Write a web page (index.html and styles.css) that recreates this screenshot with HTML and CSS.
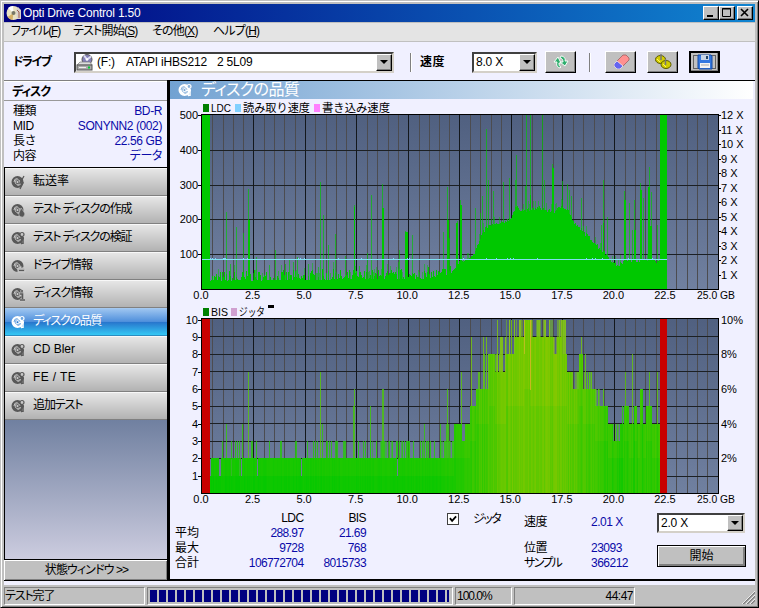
FILE: index.html
```html
<!DOCTYPE html>
<html lang="ja">
<head>
<meta charset="utf-8">
<title>Opti Drive Control 1.50</title>
<link rel="stylesheet" href="styles.css">
</head>
<body>
<svg class="defs" width="0" height="0">
  <symbol id="disc" viewBox="0 0 16 16">
    <path fill="currentColor" fill-rule="evenodd" d="M7.5 2a6 6 0 1 0 0 12a6 6 0 1 0 0-12zM7.5 7a1.1 1.1 0 1 1 0 2.2a1.1 1.1 0 1 1 0-2.2z"/>
    <path fill="none" stroke="var(--ring)" stroke-width="1" d="M4 8a3.5 3.5 0 0 1 3.5-3.5M11 8a3.5 3.5 0 0 1-3.5 3.5M7.5 5.7a2.4 2.4 0 1 0 .1 0"/>
  </symbol>
  <symbol id="gears" viewBox="0 0 16 16">
    <use href="#disc"/>
    <circle cx="12" cy="4.5" r="2" fill="var(--ring)" stroke="currentColor" stroke-width="1.2"/>
    <path d="M9 8.5h5M13 7v7M10 11l2 3" stroke="currentColor" stroke-width="1.5"/>
  </symbol>
</svg>
<div class="window">
  <header class="titlebar">
    <svg class="app-icon" viewBox="0 0 16 16"><circle cx="7.5" cy="8" r="7" fill="#e9e2c4"/><path d="M7.5 8L2 3a7 7 0 0 1 5-2z" fill="#fff"/><path d="M7.5 8l-6 4a7 7 0 0 0 5 3z" fill="#d7b268"/><circle cx="7.5" cy="8" r="2" fill="#776"/><path d="M10 5l2-3 3 3v9h-4z" fill="#d9d2cc"/><path d="M11 5l2 2v6" stroke="#9a5a4a" fill="none"/></svg>
    <h1>Opti Drive Control 1.50</h1>
    <div class="win-buttons">
      <button class="wb"><svg viewBox="0 0 14 12"><path d="M3 9h6" stroke="#000" stroke-width="2"/></svg></button><button class="wb"><svg viewBox="0 0 14 12"><path d="M2.5 1.5h8v8h-8zM2 2h9" stroke="#000" fill="none"/></svg></button><button class="wb close"><svg viewBox="0 0 14 12"><path d="M3 2l7 7M10 2l-7 7" stroke="#000" stroke-width="1.6"/></svg></button>
    </div>
  </header>
  <nav class="menu"><span class="m1">ファイル(<u>F</u>)</span><span class="m2">テスト開始(<u>S</u>)</span><span class="m3">その他(<u>X</u>)</span><span class="m4">ヘルプ(<u>H</u>)</span></nav>
  <div class="toolbar">
    <b class="lbl-drive">ドライブ</b>
    <div class="combo drive">
      <svg class="drive-icon" viewBox="0 0 18 17"><circle cx="11" cy="5.5" r="5" fill="#8580b8" stroke="#555"/><path d="M11 5.5L8 1.5M11 5.5l4-3" stroke="#dcdcf4" stroke-width="2"/><circle cx="11" cy="5.5" r="1.3" fill="#fff"/><path d="M1 11l3-3h10l2 3z" fill="#ddd" stroke="#777" stroke-width=".7"/><rect x="1" y="11" width="15" height="5" fill="#aaa" stroke="#555"/><path d="M3 13.5h7" stroke="#eee"/><rect x="12" y="12.5" width="2" height="2" fill="#0c3"/></svg>
      <span class="combo-text"><span class="letter">(F:)</span><span class="model">ATAPI iHBS212</span><span>2 5L09</span></span><i class="arrow"></i>
    </div>
    <i class="sep s1"></i>
    <b class="lbl-speed">速度</b>
    <div class="combo speed"><span class="combo-text">8.0 X</span><i class="arrow"></i></div>
    <button class="tool t1"><svg viewBox="0 0 18 16"><path d="M8 14c-3-1-4-3-3-6H2l4-5 3 6H7c0 2 0 3 2 4zM9 2c3 0 5 3 4 5h3l-3 5-5-4h3c0-2-1-4-3-4z" fill="#2fae6e" stroke="#f4fff8" stroke-width="1"/></svg></button>
    <i class="sep s2"></i>
    <button class="tool t2"><svg viewBox="0 0 18 16"><path d="M2 10L11 1h3l3 3v2L8 15H5l-3-3z" fill="#ff9090" stroke="#a06060" stroke-width=".8"/><path d="M2 10l3-3 6 5-3 3H5l-3-3z" fill="#6464f0" stroke="#eee" stroke-width=".8"/></svg></button>
    <button class="tool t3"><svg viewBox="0 0 18 16"><g fill="#d2cc00" stroke="#5c5a00"><ellipse cx="6.5" cy="5.5" rx="5" ry="4"/><ellipse cx="12" cy="10.5" rx="5" ry="4"/></g><path d="M3 5l3 3M9 10l3 3" stroke="#fff860"/><path d="M7 0v6M11.500 5v6" stroke="#777" stroke-width="1.5"/></svg></button>
    <button class="tool t4"><svg viewBox="0 0 24 16"><rect x=".5" y="1.5" width="22" height="13" fill="none" stroke="#000" stroke-dasharray="1 1"/><path d="M5 1h13l1 1v13H6l-1-1z" fill="#3478e0" stroke="#164aa0"/><path d="M8 1h8v5H8z" fill="#c8d4e4"/><path d="M13 2h2v3h-2z" fill="#246"/><path d="M7 9h10v5H7z" fill="#f4f4f4"/><path d="M8 11h8" stroke="#aaa"/></svg></button>
  </div>
  <div class="content">
    <aside class="sidebar">
      <h2>ディスク</h2>
      <dl class="info">
        <div><dt>種類</dt><dd>BD-R</dd></div>
        <div><dt>MID</dt><dd>SONYNN2 (002)</dd></div>
        <div><dt>長さ</dt><dd>22.56 GB</dd></div>
        <div><dt>内容</dt><dd class="kana">データ</dd></div>
      </dl>
      <ul class="tests">
        <li><svg viewBox="0 0 16 16"><use href="#disc"/><path d="M14 2l-4 7h3l-3 6" stroke="currentColor" fill="none" stroke-width="1.3"/></svg><span>転送率</span></li>
        <li><svg viewBox="0 0 16 16"><use href="#disc"/><path d="M11 6l3 4a3 3 0 1 1-5 1z" fill="currentColor" stroke="#ccc" stroke-width=".6"/></svg><span class="n2">テスト ディスクの作成</span></li>
        <li><svg viewBox="0 0 16 16"><use href="#gears"/></svg><span class="n2">テスト ディスクの検証</span></li>
        <li><svg viewBox="0 0 16 16"><use href="#disc"/><path d="M8 10h7v4H8z" fill="#aaa" stroke="#ccc"/><path d="M9 12.5h5" stroke="currentColor"/></svg><span class="n3">ドライブ情報</span></li>
        <li><svg viewBox="0 0 16 16"><use href="#disc"/><path d="M10 8h3v5M10 14h5M12 4v2" stroke="#ccc" stroke-width="3" fill="none"/><path d="M10 8h2.500v5M10 14h5M12 4v2" stroke="currentColor" stroke-width="1.6" fill="none"/></svg><span class="n3">ディスク情報</span></li>
        <li class="active"><svg viewBox="0 0 16 16"><use href="#gears"/></svg><span class="n4">ディスクの品質</span></li>
        <li><svg viewBox="0 0 16 16"><use href="#gears"/></svg><span>CD Bler</span></li>
        <li><svg viewBox="0 0 16 16"><use href="#gears"/></svg><span class="fe">FE / TE</span></li>
        <li><svg viewBox="0 0 16 16"><use href="#gears"/></svg><span class="n5">追加テスト</span></li>
      </ul>
      <div class="filler"></div>
      <button class="status-toggle">状態ウィンドウ &gt;&gt;</button>
    </aside>
    <main class="panel">
      <div class="panel-head"><svg viewBox="0 0 16 16"><use href="#gears"/></svg><span>ディスクの品質</span></div>
      <svg id="ldc" class="chart" width="583" height="205" viewBox="170 99 583 205"></svg>
      <svg id="bis" class="chart" width="583" height="202" viewBox="170 304 583 202"></svg>
      <div class="results">
        <table>
          <tr><th></th><td class="h">LDC</td><td class="h">BIS</td></tr>
          <tr><th>平均</th><td>288.97</td><td>21.69</td></tr>
          <tr><th>最大</th><td>9728</td><td>768</td></tr>
          <tr><th>合計</th><td>106772704</td><td>8015733</td></tr>
        </table>
        <div class="jitter"><i class="check"><svg viewBox="0 0 9 9"><path d="M1 3.500l2.500 3L8 1.500" stroke="#000" stroke-width="2" fill="none"/></svg></i><span>ジッタ</span></div>
        <dl class="pos">
          <dt>速度</dt><dd>2.01 X</dd>
          <dt>位置</dt><dd>23093</dd>
          <dt class="sample">サンプル</dt><dd>366212</dd>
        </dl>
        <div class="actions">
          <div class="combo scan"><span class="combo-text">2.0 X</span><i class="arrow"></i></div>
          <button class="start">開始</button>
        </div>
      </div>
    </main>
  </div>
  <footer class="statusbar">
    <div class="pane p1">テスト完了</div>
    <div class="pane p2"><i class="bar"></i></div>
    <div class="pane p3">100.0%</div>
    <div class="pane p4">44:47</div>
    <svg class="grip" viewBox="0 0 13 13"><path d="M1 13L13 1M5 13l8-8M9 13l4-4" stroke="#808080" stroke-width="1.6"/><path d="M0 13L13 0M4 13l9-9M8 13l5-5" stroke="#fff" stroke-width=".8"/></svg>
  </footer>
</div>
<script src="charts.js"></script>
</body>
</html>
```
FILE: styles.css
```css
* { box-sizing: border-box; }
body { margin: 0; background: #c0c0c0; }
body, button { font: 12px/15px "Liberation Sans", "Noto Sans CJK JP", sans-serif; color: #000; }
button { padding: 0; }
.defs { position: absolute; }
svg { display: block; }
h1, h2, dl, dd, ul { margin: 0; padding: 0; font-weight: normal; }
.window { width: 759px; height: 608px; padding: 3px 3px 2px; border: 1px solid; border-color: #c0c0c0 #000 #000 #c0c0c0; box-shadow: inset 1px 1px #fff, inset -1px -1px #808080; background: #c0c0c0; display: flex; flex-direction: column; overflow: hidden; white-space: nowrap; }

.titlebar { flex: 0 0 18px; display: flex; align-items: center; background: linear-gradient(90deg, #000080, #1084d0); color: #fff; padding: 0 2px; }
.app-icon { width: 16px; height: 16px; }
.titlebar h1 { font-size: 12px; line-height: 18px; margin-left: 1px; flex: 1; letter-spacing: -0.2px; }
.win-buttons { display: flex; }
.wb { width: 16px; height: 14px; background: #c0c0c0; border: 1px solid; border-color: #fff #000 #000 #fff; box-shadow: inset -1px -1px #808080; }
.wb svg { width: 14px; height: 12px; }
.close { margin-left: 2px; }

.menu { flex: 0 0 20px; background: #e4e4e4; border-top: 1px solid #c0c0c0; border-bottom: 1px solid #c0c0c0; display: flex; line-height: 17px; padding-left: 7px; font-feature-settings: "palt"; }
.menu span { letter-spacing: -0.8px; }
.m1 { width: 62px; } .m2 { width: 79px; } .m3 { width: 61px; }
.menu .m1 { letter-spacing: -1.1px; }

.toolbar { flex: 0 0 38px; display: flex; align-items: center; padding: 2px 0 0 9px; background: #f0f0ff; }
.lbl-drive { width: 61px; font-feature-settings: "palt"; letter-spacing: -1.5px; }
.lbl-speed { width: 52px; letter-spacing: 0.5px; margin-left: 8px; }
.combo { display: flex; background: #fff; border: 2px solid; border-color: #404040 #d4d0c8 #d4d0c8 #404040; height: 21px; line-height: 17px; }
.combo-text { flex: 1; padding-left: 2px; letter-spacing: -0.2px; }
.drive { width: 320px; margin-right: 16px; }
.drive .combo-text { display: flex; }
.letter { width: 30px; padding-left: 1px; }
.model { width: 91px; }
.drive-icon { width: 18px; height: 17px; }
.speed { width: 65px; }
.arrow { width: 16px; background: #c0c0c0; border: 1px solid; border-color: #fff #000 #000 #fff; box-shadow: inset -1px -1px #808080; display: grid; place-items: center; }
.arrow::before { content: ""; border: solid transparent; border-width: 4px 4px 0; border-top-color: #000; }
.sep { width: 2px; height: 19px; border-left: 1px solid #808080; border-right: 1px solid #fff; }
.tool { width: 31px; height: 22px; background: #c0c0c0; border: 1px solid; border-color: #fff #000 #000 #fff; box-shadow: inset -1px -1px #808080; display: grid; place-items: center; }
.tool svg { width: 18px; height: 16px; }
.t1 { margin: 0 13px 0 8px; }
.t2 { margin-left: 14px; }
.t3, .t4 { margin-left: 11px; }
.t4 { border: 2px solid #000; }
.tool.t4 svg { width: 24px; }

.content { flex: 0 0 501px; display: flex; border-bottom: 1px solid #000; background: #f0f0ff; }
.sidebar { width: 166px; border-right: 3px solid #000; display: flex; flex-direction: column; }
.sidebar h2 { height: 21px; border-top: 1px solid #808080; box-shadow: inset 0 1px #fff; font-size: 12px; font-weight: bold; line-height: 22px; padding-left: 8px; border-bottom: 1px solid #999; font-feature-settings: "palt"; letter-spacing: -1px; }
.info { height: 66px; padding: 3px 5px 0 9px; }
.info div { display: flex; justify-content: space-between; }
dd, .results td { color: #0a0aa8; }
.info dt, .info dd { letter-spacing: -0.4px; }
.kana { font-feature-settings: "palt"; }
.tests { list-style: none; border-top: 1px solid #000; border-left: 1px solid #000; }
.tests li { --ring: #c8c8c8; color: #000; height: 28px; display: flex; align-items: center; padding-left: 5px; border-top: 1px solid #f8f8f8; border-bottom: 1px solid #808080; background: linear-gradient(#e6e6e6, #b2b2b2); }
.tests svg { width: 16px; height: 16px; color: #585858; margin-right: 7px; }
.tests .active { --ring: #6aa4e0; color: #fff; border-top-color: #a4c8f0; border-bottom-color: #2a8cc0; background: linear-gradient(#9cc4f0, #5090dc 48%, #2874cc 50%, #34c8f4); }
.tests .active svg { color: #fff; }
.tests span { line-height: 18px; padding-bottom: 2px; font-feature-settings: "palt"; }
.n2 { letter-spacing: -1.15px; }
.n3 { letter-spacing: -1px; }
.n4, .n5 { letter-spacing: -1.1px; }
.tests .n4 { letter-spacing: -1.2px; }
.fe { letter-spacing: 0.4px; }
.filler { flex: 1; border-left: 1px solid #000; background: linear-gradient(#7080a0, #ccccdf); }
.status-toggle { height: 21px; background: #c0c0c0; border: 0; border-top: 1px solid #000; box-shadow: inset 1px 1px #fff, inset -1px -1px #808080; font-feature-settings: "palt"; letter-spacing: -0.9px; padding-left: 2px; }

.panel { width: 585px; border-top: 1px solid #000; border-bottom: 1px solid #000; }
.panel-head { --ring: #8cb4dc; height: 18px; width: 583px; display: flex; align-items: center; color: #fff; background: linear-gradient(90deg, #72a2d2, #fff); padding-left: 7px; font-size: 16px; line-height: 18px; font-feature-settings: "palt"; letter-spacing: -0.6px; }
.panel-head svg { width: 16px; height: 16px; margin-right: 8px; }
.chart text { font: 11px "Liberation Sans", "Noto Sans CJK JP", sans-serif; }
.results { display: flex; height: 71px; padding-left: 5px; }
.results table { border-collapse: collapse; width: 191px; height: 60px; margin-top: 5px; table-layout: fixed; }
.results th, .results td { padding: 0; height: 15px; line-height: 15px; text-align: right; }
.results th { font-weight: normal; text-align: left; width: 66px; }
.results td { letter-spacing: -0.6px; }
.results .h { color: #000; }
.jitter { display: flex; align-items: center; height: 14px; margin: 6px 0 0 81px; width: 77px; font-feature-settings: "palt"; letter-spacing: -1.5px; }
.check { width: 12px; height: 12px; border: 1px solid #404040; background: #fff; margin-right: 14px; padding: 1px; }
.pos { display: grid; grid-template-columns: 67px 66px; grid-template-rows: 26px 15px 15px; margin-top: 9px; letter-spacing: -0.5px; }
.sample { font-feature-settings: "palt"; letter-spacing: -1.7px; }
.scan { width: 88px; height: 20px; line-height: 16px; margin-top: 7px; }
.start { width: 89px; height: 22px; margin-top: 12px; background: #c0c0c0; border: 1px solid #000; box-shadow: inset 1px 1px #fff, inset -2px -2px #808080; }

.statusbar { flex: 1; border-top: 4px solid #f0f0ff; background: #c0c0c0; display: flex; padding-top: 2px; gap: 2px; }
.pane { height: 18px; border: 1px solid; border-color: #808080 #fff #fff #808080; line-height: 16px; }
.p1 { width: 141px; font-feature-settings: "palt"; letter-spacing: -1.1px; }
.p2 { width: 306px; padding: 2px 3px 2px 2px; }
.bar { display: block; height: 12px; background: repeating-linear-gradient(90deg, #000080 0 7px, #c0c0c0 7px 9px); }
.p3 { width: 57px; letter-spacing: -1px; padding-left: 1px; }
.p4 { width: 121px; text-align: right; padding-right: 1px; letter-spacing: -0.5px; }
.grip { width: 13px; height: 13px; margin: 4px 0 0 auto; }
```
FILE: charts.js
```js
const LEFT = 202, RIGHT = 718, GB = 20.62;
let seed = 7;
const rnd = () => (seed = (seed * 16807) % 2147483647) / 2147483647;
const rect = (x, y, w, h, fill, o = 1) => `<rect x="${x}" y="${y}" width="${w}" height="${h}" fill="${fill}" fill-opacity="${o}"/>`;
const label = (x, y, s, anchor, w) => `<text x="${x}" y="${y}" text-anchor="${anchor}"${w ? ` textLength="${w}" lengthAdjust="spacingAndGlyphs"` : ''}>${s}</text>`;

function interpolate(points, x) {
  for (let i = 1; i < points.length; i++) {
    const [x0, y0] = points[i - 1], [x1, y1] = points[i];
    if (x <= x1) return y0 + (y1 - y0) * (x - x0) / (x1 - x0);
  }
  return points[points.length - 1][1];
}

function frame(id, top, bottom, rows) {
  let s = `<defs><linearGradient id="bg-${id}" x2="0" y2="1"><stop stop-color="#506080"/><stop offset="1" stop-color="#7080a0"/></linearGradient></defs>`;
  s += rect(LEFT, top, RIGHT - LEFT, bottom - top, `url(#bg-${id})`);
  for (let i = 1; i < 50; i++) if (i % 5) s += rect(Math.round(LEFT + i * GB / 2), top, 1, bottom - top, '#4c4c50');
  for (let i = 1; i < rows; i++) s += rect(LEFT, Math.round(top + i * (bottom - top) / rows), RIGHT - LEFT, 1, '#1c2024');
  for (let i = 5; i < 50; i += 5) s += rect(Math.floor(LEFT + i * GB / 2), top, 1, bottom - top, '#14181c');
  return s;
}

function axes(top, bottom) {
  let s = rect(LEFT - 1, top - 1, RIGHT - LEFT + 2, 1, '#000') + rect(LEFT - 1, bottom, RIGHT - LEFT + 2, 1, '#000')
    + rect(LEFT - 1, top, 1, bottom - top, '#000') + rect(RIGHT, top, 1, bottom - top, '#000');
  for (let i = 0; i <= 10; i++) {
    const x = LEFT + i * 2.5 * GB - 1;
    s += i < 10 ? label(x, bottom + 10, (i * 2.5).toFixed(1), 'middle') : label(697, bottom + 10, '25.0 GB', 'start', 38);
  }
  return s;
}

function drawLdc() {
  const top = 115, bottom = 289;
  const floor = [[210, 281], [420, 279], [440, 277], [452, 273], [459, 265], [468, 261], [475, 253], [480, 241], [485, 230], [488, 228], [500, 226], [510, 220], [516, 209], [524, 213], [532, 211], [540, 210], [548, 213], [556, 213], [562, 207], [568, 213], [573, 224], [580, 232], [590, 240], [600, 251], [610, 261], [615, 267], [620, 266], [625, 262], [660, 263]];
  const spikes = [[226,212],[236,227],[243,233],[248,189],[275,250],[320,182],[323,215],[328,245],[335,234],[354,205],[230,264],[256,257],[269,265],[285,264],[289,260],[293,262],[297,257],[308,264],[318,267],[345,256],[359,266],[367,253],[371,195],[382,184],[399,250],[405,231],[412,235],[443,232],[447,187],[449,238],[457,221],[460,200],[475,208],[480,213],[482,196],[486,129],[488,180],[493,191],[503,182],[509,178],[515,180],[516,155],[525,186],[526,115],[530,115],[542,115],[544,180],[552,164],[562,181],[567,184],[569,190],[571,196],[581,198],[583,226],[601,225],[603,180],[607,217],[624,191],[629,203],[632,230],[634,200],[640,183],[643,198],[649,167],[651,192],[657,225]];
  const solid = [[248,220,2],[354,207,1],[382,208,2],[405,232,3],[447,220,2],[456,223,2],[460,205,2],[552,168,2],[581,228,1],[603,223,1],[624,200,2],[634,230,2],[640,190,2],[648,187,2],[650,226,2],[530,195,1]];
  let s = frame('ldc', top, bottom, 5);
  for (const [x, y] of spikes) s += rect(x, y, 1, bottom - y, '#00c800', 0.65);
  for (let x = 210; x < 660; x++) {
    const noise = x < 455 ? Math.pow(rnd(), 2.5) * 11 : rnd() * 4;
    const y = Math.round(interpolate(floor, x) - noise);
    s += rect(x, y, 1, bottom - y, '#00c800');
    if (rnd() < 0.16) s += rect(x, y - 7, 1, 7, '#00c800', 0.5);
  }
  for (const [x, y, w] of solid) s += rect(x, y, w, bottom - y, '#00c800');
  s += rect(LEFT, top, 8, bottom - top, '#00c800') + rect(660, top, 7, bottom - top, '#00c800');
  s += rect(LEFT, 259, 465, 1, '#80e0f0');
  for (let i = 0; i < 30; i++) s += rect(Math.round(206 + rnd() * 455), 258, 1, 1, '#80d0ff');
  s += axes(top, bottom);
  for (let v = 1; v <= 5; v++) {
    const y = Math.round(bottom - v * 34.8);
    s += label(198, y + 4, v * 100, 'end') + rect(198, y, 4, 1, '#000');
  }
  for (let v = 1; v <= 12; v++) {
    const y = Math.round(bottom - v * 14.5);
    s += label(721, y + 4, `${v} X`, 'start') + rect(718, y, 3, 1, '#000');
  }
  s += rect(203, 104, 6, 8, '#008000') + label(211, 112, 'LDC', 'start', 20)
    + rect(235, 104, 6, 8, '#80d0ff') + label(243, 112, '読み取り速度', 'start', 67)
    + rect(314, 104, 6, 8, '#ff80ff') + label(322, 112, '書き込み速度', 'start', 68);
  document.getElementById('ldc').innerHTML = `<g shape-rendering="crispEdges">${s}</g>`;
}

function drawBis() {
  const top = 319, bottom = 493, unit = 17.35;
  // [first x, level, level of the fainter columns above it]
  const steps = [[210,2,2],[370,2,3],[454,4,4],[462,3,3],[465,4,4],[470,5,5],[476,6,6],[482,6,8],[489,8,8],[495,7,8],[500,7,9],[506,8,10],[515,9,10],[524,10,10],[530,9,10],[553,8,9],[557,9,10],[562,8,10],[567,7,8],[572,6,7],[579,8,8],[583,6,7],[593,6,6],[595,5,6],[604,5,5],[608,4,4],[613,3,4],[620,4,5],[624,5,5],[629,4,4],[634,5,5],[637,4,4],[640,6,6],[643,4,4],[646,5,5],[652,4,4]];
  const spikes = [[222,3],[226,4],[231,3],[235,3],[237,3],[239,3],[242,4],[248,7],[251,3],[252,3],[256,3],[269,3],[280,3],[281,3],[295,3],[296,3],[307,3],[313,3],[315,3],[317,3],[320,7],[322,4],[326,3],[327,3],[329,3],[331,3],[335,3],[336,3],[337,3],[343,3],[344,3],[345,3],[353,5],[354,6],[358,3],[363,3],[365,3],[370,5],[382,6],[383,6],[406,3],[407,3],[408,3],[409,3],[424,4],[440,4],[446,4],[447,6],[448,4],[461,7],[471,9],[478,7],[479,7],[483,9],[486,9],[497,10],[502,9],[581,9],[585,8],[587,7],[589,7],[591,7],[625,7],[632,8],[649,7],[657,7]];
  const gaps = new Set([210, 219, 220, 231, 239, 241, 257, 301, 397]);
  const warmth = [[210, 14], [440, 22], [460, 40], [480, 68], [500, 96], [520, 116], [560, 108], [580, 80], [600, 58], [615, 36], [660, 50]];
  const yOf = v => Math.round(bottom - v * unit);
  let s = frame('bis', top, bottom, 10);
  for (const [x, v] of spikes) s += rect(x, yOf(v), 1, bottom - yOf(v), `rgb(${v * 13},200,10)`, 0.8);
  let k = 0;
  for (let x = 210; x < 660; x++) {
    while (k + 1 < steps.length && x >= steps[k + 1][0]) k++;
    const [, low, high] = steps[k];
    const level = gaps.has(x) ? 1 : low;
    const w = interpolate(warmth, x);
    const r = Math.round(w + (rnd() - 0.5) * (x < 470 ? 10 : 34));
    if (high > low && rnd() < 0.52) s += rect(x, yOf(high), 1, yOf(low) - yOf(high), `rgb(${r + 24},200,20)`, rnd() < 0.4 ? 0.5 : 0.9);
    s += rect(x, yOf(level), 1, bottom - yOf(level), `rgb(${r + 6},200,0)`);
    const inner = Math.max(1, Math.round(level * 0.6));
    s += rect(x, yOf(inner), 1, bottom - yOf(inner), `rgb(${Math.max(0, r - 6)},200,0)`);
  }
  s += rect(530, yOf(10), 1, 70, '#c8b820') + rect(524, yOf(10), 1, 34, '#b8c020');
  s += rect(LEFT, top, 8, bottom - top, '#c80000') + rect(660, top, 7, bottom - top, '#c80000');
  s += axes(top, bottom);
  for (let v = 1; v <= 10; v++) s += label(198, yOf(v) + 4, v, 'end') + rect(198, yOf(v), 4, 1, '#000');
  for (let v = 2; v <= 10; v += 2) s += label(721, yOf(v) + 4, `${v}%`, 'start');
  s += rect(203, 308, 6, 8, '#008000') + label(211, 316, 'BIS', 'start', 17)
    + rect(231, 308, 6, 8, '#d0a0d0') + label(239, 316, 'ジッタ', 'start', 26) + rect(268, 305, 6, 3, '#000');
  document.getElementById('bis').innerHTML = `<g shape-rendering="crispEdges">${s}</g>`;
}

drawLdc();
drawBis();
```
